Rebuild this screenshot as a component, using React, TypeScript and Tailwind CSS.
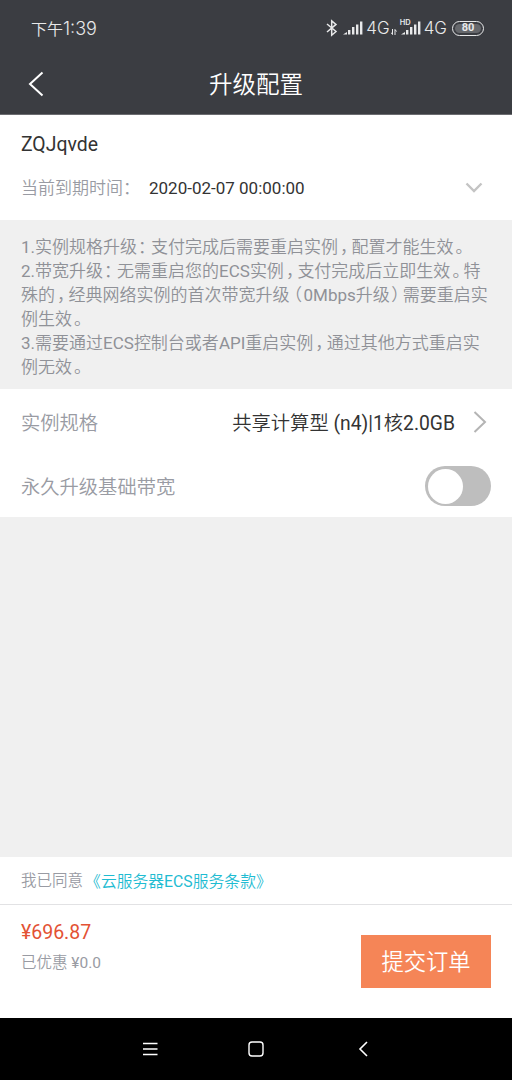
import React from 'react';
import clsx from 'clsx';

const SignalIcon: React.FC<{ className?: string }> = ({ className }) => (
  <svg className={className} width="20" height="14" viewBox="0 0 20 14" fill="currentColor">
    <path d="M0 13.5 L4 11 V13.5 Z" />
    <rect x="5" y="9" width="2.4" height="4.5" />
    <rect x="9" y="6" width="2.4" height="7.5" />
    <rect x="13" y="3.5" width="2.4" height="10" />
    <rect x="17" y="0.5" width="2.4" height="13" />
  </svg>
);

const BluetoothIcon: React.FC = () => (
  <svg width="12" height="18" viewBox="0 0 12 18" fill="none" stroke="currentColor" strokeWidth="1.5">
    <path d="M1 5 L10 12.5 L5.7 16.2 V1.8 L10 5.4 L1 13" />
  </svg>
);

// half-width punctuation with a little air around it
const Punct: React.FC<{ children: string }> = ({ children }) => (
  <span
    className={clsx(
      "[font-feature-settings:'halt']",
      children === '：' && 'pl-px pr-[4.5px]',
      children === '，' && 'pl-[2px] pr-[3px]',
      children === '。' && 'pl-[2px] pr-[2.5px]',
      children === '（' && 'pl-[4px] pr-[1.5px]',
      children === '）' && 'pl-[1.5px] pr-[3px]'
    )}
  >
    {children}
  </span>
);

const notices = [
  '1.实例规格升级：支付完成后需要重启实例，配置才能生效。',
  '2.带宽升级：无需重启您的ECS实例，支付完成后立即生效。特',
  '殊的，经典网络实例的首次带宽升级（0Mbps升级）需要重启实',
  '例生效。',
  '3.需要通过ECS控制台或者API重启实例，通过其他方式重启实',
  '例无效。'
];

// latin runs are set in the regular weight, CJK keeps the lighter one
const renderNotice = (line: string) =>
  line.split(/([：，。（）]|[\w.]+)/).map((part, i) => {
    if (/^[：，。（）]$/.test(part)) return <Punct key={i}>{part}</Punct>;
    if (/^[\w.]+$/.test(part)) return <span key={i} className="font-normal">{part}</span>;
    return part;
  });

const StatusBar: React.FC = () => (
  <div className="flex h-14 items-center justify-between pl-[31px] pr-7 text-[#e8e9ea]">
    <div className="pt-px font-['Inter','Noto_Sans_CJK_SC',sans-serif] text-[16px] font-[350] leading-5">
      下午<span className="text-[18px]">1:39</span>
    </div>
    <div className="flex items-center font-['Inter',sans-serif] text-[17px] font-[350] leading-5">
      <BluetoothIcon />
      <SignalIcon className="ml-[5px]" />
      <span className="ml-[3px]">4G</span>
      <svg className="ml-px mt-2" width="6" height="6" viewBox="0 0 6 6" fill="none" stroke="currentColor">
        <path d="M0 3.5 L1.5 5.5 V0 M4 6 V0.5 L5.5 2.5" />
      </svg>
      <div className="relative ml-[4px]">
        <SignalIcon />
        <span className="absolute -left-px -top-[2px] bg-[#3b3d42] pr-px text-[7.5px] font-semibold leading-[8px]">HD</span>
      </div>
      <span className="ml-[3px]">4G</span>
      <div className="ml-[5px] flex h-[15px] w-8 items-center justify-center rounded-full border-[1.5px] border-current p-0.5">
        <span className="flex h-full w-full items-center justify-center rounded-full bg-[#66686c] font-['Roboto',sans-serif] text-[11px] font-bold">80</span>
      </div>
    </div>
  </div>
);

const App: React.FC = () => {
  return (
    <div className="flex h-[1080px] w-[512px] flex-col overflow-hidden bg-[#f0f0f0] font-['Roboto','Noto_Sans_CJK_SC',sans-serif]">
      {/* Header */}
      <header className="h-[115px] border-b border-[#6b6c70] bg-[#3b3d42]">
        <StatusBar />
        <div className="grid h-14 grid-cols-[1fr_auto_1fr] items-center px-7 text-white">
          <svg width="16" height="26" viewBox="0 0 16 26" fill="none" stroke="currentColor" strokeWidth="2">
            <path d="M14.5 1.5 L2 13 L14.5 24.5" />
          </svg>
          <h1 className="pt-0.5 text-[23.5px] font-[350] leading-8">升级配置</h1>
        </div>
      </header>

      {/* Instance */}
      <section className="h-[105px] bg-white px-[21px] pt-4 text-[#333]">
        <div className="text-[19.4px] leading-7">ZQJqvde</div>
        <div className="mt-[15px] flex items-center text-[17px] leading-7">
          <span className="w-32 whitespace-nowrap font-[350] text-[#999ba3]">
            当前到期时间<span className="[font-feature-settings:'halt']">：</span>
          </span>
          <span>2020-02-07 00:00:00</span>
          <svg className="ml-auto mr-2" width="18" height="12" viewBox="0 0 18 12" fill="none" stroke="#c4c4c4" strokeWidth="2.4">
            <path d="M1.5 1.5 L9 9 L16.5 1.5" />
          </svg>
        </div>
      </section>

      {/* Notice */}
      <section className="h-[169px] px-[21px] pt-[14.5px] text-[17px] font-[350] leading-6 text-[#8f9197]">
        {notices.map((line) => (
          <div key={line} className="h-6 whitespace-nowrap">{renderNotice(line)}</div>
        ))}
      </section>

      {/* Options */}
      <section className="h-32 bg-white px-[21px] text-[19.3px]">
        <div className="flex h-[66px] items-center">
          <span className="pt-1 font-[350] text-[#999ba3]">实例规格</span>
          <span className="ml-auto pt-1 text-[#333]">
            <span className="font-[350]">共享计算型</span> (n4)|1<span className="font-[350]">核</span>2.0GB
          </span>
          <svg className="ml-[18px] mr-1" width="14" height="22" viewBox="0 0 14 22" fill="none" stroke="#b4b4b4" strokeWidth="2">
            <path d="M1.5 1 L12 11 L1.5 21" />
          </svg>
        </div>
        <div className="flex h-[62px] items-center justify-between">
          <span className="pt-1 font-[350] text-[#999ba3]">永久升级基础带宽</span>
          <button className="flex h-10 w-[66px] items-center rounded-full bg-[#bebebe] px-[2.5px]">
            <span className="h-[35px] w-[35px] rounded-full bg-white" />
          </button>
        </div>
      </section>

      {/* Checkout */}
      <footer className="mt-auto">
        <div className="flex h-12 items-center border-b border-[#e2e2e4] bg-white px-[21px] pt-[3px] text-[15.5px] font-[350]">
          <span className="w-[72px] text-[#999ba3]">我已同意</span>
          <a href="#" className="text-[15.8px] text-[#1fbcd2] [font-feature-settings:'halt']">
            《云服务器<span className="font-normal">ECS</span>服务条款》
          </a>
        </div>
        <div className="flex h-[113px] justify-between bg-white px-[21px]">
          <div className="pt-[14px]">
            <div className="text-[19.5px] leading-7 text-[#e35234]">¥696.87</div>
            <div className="mt-1 text-[15.5px] font-[350] leading-6 text-[#999ba3]">
              已优惠 <span className="font-normal">¥0.0</span>
            </div>
          </div>
          <button className="mt-[30px] h-[53px] w-[130px] bg-[#f58557] pt-0.5 text-[22.3px] font-[350] text-white">提交订单</button>
        </div>
        {/* System navigation */}
        <nav className="flex h-[62px] items-center bg-black pl-[142px] text-white">
          <svg width="16" height="16" viewBox="0 0 16 16" stroke="currentColor" strokeWidth="1.4">
            <path d="M1 2.5 H15.5 M1 8 H15.5 M1 13.5 H15.5" />
          </svg>
          <svg className="ml-[90px]" width="16" height="16" viewBox="0 0 16 16" fill="none" stroke="currentColor" strokeWidth="1.4">
            <rect x="1" y="1" width="14" height="14" rx="3" />
          </svg>
          <svg className="ml-[94px]" width="10" height="16" viewBox="0 0 10 16" fill="none" stroke="currentColor" strokeWidth="1.6">
            <path d="M9 1 L2 8 L9 15" />
          </svg>
        </nav>
      </footer>
    </div>
  );
};

export default App;
